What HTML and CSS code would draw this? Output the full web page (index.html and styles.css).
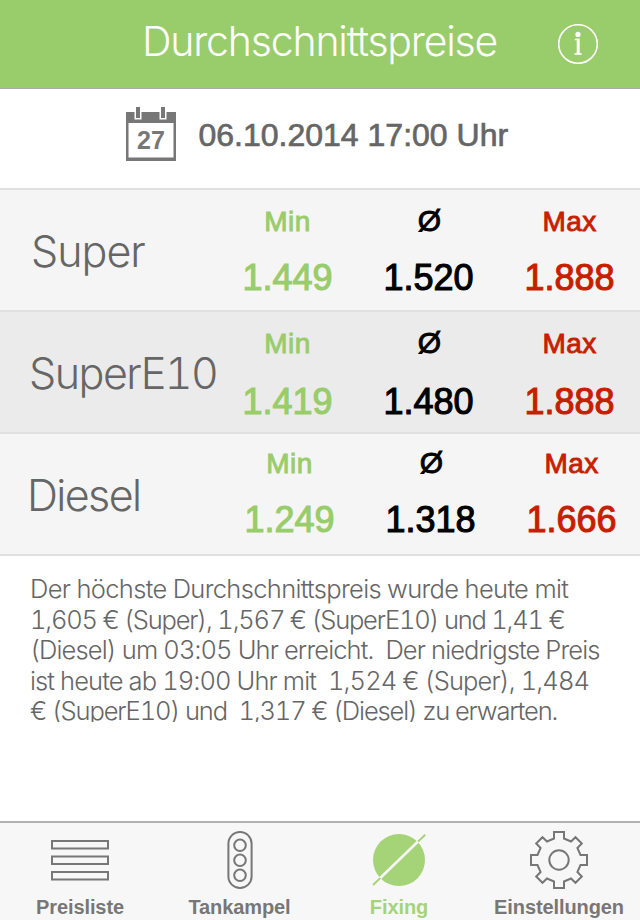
FILE: index.html
```html
<!DOCTYPE html>
<html lang="de">
  <head>
    <meta charset="UTF-8" />
    <meta name="viewport" content="width=device-width, initial-scale=1.0" />
    <title>Durchschnittspreise</title>
    <link rel="stylesheet" href="styles.css">
  </head>
  <body>
    <header>
      <h1>Durchschnittspreise</h1>
      <button class="info" aria-label="Info">
        <svg width="42" height="42" viewBox="0 0 42 42">
          <circle cx="21" cy="21" r="19.3" fill="none" stroke="#fff" stroke-width="1.6" />
          <circle cx="21" cy="11.4" r="2.6" fill="#fff" />
          <path d="M17.8 16.4H21M17.5 30.9h7.2" fill="none" stroke="#fff" stroke-width="1.5" />
          <path d="M21.2 15.6v15.6" fill="none" stroke="#fff" stroke-width="3" />
        </svg>
      </button>
    </header>

    <section class="datum">
      <svg class="kalender" width="50" height="54" viewBox="0 0 50 54">
        <path d="M0 5h50v49H0zM2.5 16v34.5h45V16z" fill="#777" fill-rule="evenodd" />
        <path d="M8.5 0h7v12.5h-7zM33.5 0h7v12.5h-7z" fill="#fff" />
        <path d="M10 0h4v11h-4zM35 0h4v11h-4z" fill="#777" />
        <text x="25" y="42" text-anchor="middle">27</text>
      </svg>
      <span>06.10.2014 17:00 Uhr</span>
    </section>

    <main>
      <article class="sorte super">
        <h2>Super</h2>
        <div class="min"><p>Min</p><strong>1.449</strong></div>
        <div class="avg"><p>Ø</p><strong>1.520</strong></div>
        <div class="max"><p>Max</p><strong>1.888</strong></div>
      </article>
      <article class="sorte e10">
        <h2>SuperE10</h2>
        <div class="min"><p>Min</p><strong>1.419</strong></div>
        <div class="avg"><p>Ø</p><strong>1.480</strong></div>
        <div class="max"><p>Max</p><strong>1.888</strong></div>
      </article>
      <article class="sorte diesel">
        <h2>Diesel</h2>
        <div class="min"><p>Min</p><strong>1.249</strong></div>
        <div class="avg"><p>Ø</p><strong>1.318</strong></div>
        <div class="max"><p>Max</p><strong>1.666</strong></div>
      </article>
    </main>

    <p class="hinweis">
      <span>Der höchste Durchschnittspreis wurde heute mit</span>
      <span>1,605 € (Super), 1,567 € (SuperE10) und 1,41 €</span>
      <span>(Diesel) um 03:05 Uhr erreicht.&nbsp; Der niedrigste Preis</span>
      <span>ist heute ab 19:00 Uhr mit&nbsp; 1,524 € (Super), 1,484</span>
      <span>€ (SuperE10) und&nbsp; 1,317 € (Diesel) zu erwarten.</span>
    </p>

    <nav>
      <a>
        <svg width="58" height="58" viewBox="0 0 58 58">
          <path d="M1 10h56v7.5H1zM1 25.5h56V33H1zM1 41h56v7.5H1z" />
        </svg>
        Preisliste
      </a>
      <a>
        <svg width="58" height="58" viewBox="0 0 58 58">
          <rect x="17.4" y="1" width="23.2" height="56" rx="11.6" />
          <circle cx="29" cy="14.3" r="5.8" />
          <circle cx="29" cy="29.3" r="5.8" />
          <circle cx="29" cy="44.3" r="5.8" />
        </svg>
        Tankampel
      </a>
      <a class="aktiv">
        <svg width="58" height="58" viewBox="0 0 58 58">
          <circle class="scheibe" cx="29" cy="29" r="26" />
          <path class="schnitt" d="M10 47.3 48.5 10" />
          <path d="M3 54l7.2-6.9M48 10.6l7.2-6.9" />
        </svg>
        Fixing
      </a>
      <a>
        <svg width="58" height="58" viewBox="0 0 58 58">
          <path d="M24 1h10v6.5l7 3 4.5-4.3 6.3 6.3-4.4 4.5 3.1 7H57v10h-6.5l-3.1 7 4.4 4.5-6.3 6.3L41 47.5l-7 3V57H24v-6.5l-7-3-4.5 4.3-6.3-6.3 4.4-4.5-3.1-7H1V24h6.5l3.1-7-4.4-4.5 6.3-6.3L17 10.5l7-3z" />
          <circle cx="29" cy="29" r="9.7" />
        </svg>
        Einstellungen
      </a>
    </nav>
  </body>
</html>
```
FILE: styles.css
```css
* {
  box-sizing: border-box;
}

body {
  margin: 0;
  width: 640px;
  height: 920px;
  display: flex;
  flex-direction: column;
  overflow: hidden;
  background: #fff;
  color: #666;
  font-family: "Liberation Sans", Arial, sans-serif;
}

h1,
h2,
p {
  margin: 0;
}

header {
  height: 89px;
  display: grid;
  grid-template-columns: 1fr 356px 1fr;
  background: #99cc6b;
  border-bottom: 1px solid #aaa;
}

h1 {
  grid-column: 2;
  color: #fff;
  font-family: Inter, sans-serif;
  font-weight: 300;
  font-size: 41px;
  line-height: 50px;
  padding-top: 16px;
  letter-spacing: -1.2px;
  white-space: nowrap;
}

.info {
  border: none;
  padding: 0;
  background: none;
  width: 42px;
  height: 42px;
  margin: 23px 0 0 59px;
}

.info svg {
  display: block;
}

.datum {
  height: 99px;
  display: flex;
  padding-left: 125.5px;
  padding-top: 18px;
  font-size: 32px;
  -webkit-text-stroke: 0.7px #666;
}

.datum span {
  margin-left: 23px;
  line-height: 56px;
  white-space: nowrap;
}

.kalender text {
  font-size: 25px;
  font-weight: bold;
  fill: #777;
  -webkit-text-stroke: 0;
}

.sorte {
  height: 122px;
  display: grid;
  grid-template-columns: 217px repeat(3, 141px);
  border-top: 2px solid #e0e0e0;
  background: #f5f5f5;
}

.sorte h2 {
  padding: 35px 0 0 31px;
  color: #666;
  font-family: Inter, sans-serif;
  font-weight: 300;
  font-size: 43px;
  line-height: 52px;
  letter-spacing: -1px;
}

.sorte div {
  padding-top: 16px;
  text-align: center;
}

.sorte p {
  height: 32px;
  font-size: 28px;
  line-height: 32px;
  letter-spacing: 0.4px;
  -webkit-text-stroke: 0.9px;
}

.sorte .avg p {
  padding-left: 2px;
  font-size: 30px;
  line-height: 29px;
}

.sorte strong {
  display: block;
  margin-top: 19px;
  font-size: 36px;
  font-weight: normal;
  line-height: 42px;
  -webkit-text-stroke: 1.1px;
}

.min {
  color: #99cc6b;
}

.avg {
  color: #000;
}

.max {
  color: #c81e00;
}

.e10 {
  background: #ebebeb;
}

.e10 h2 {
  padding-left: 29px;
  letter-spacing: -1.5px;
  font-feature-settings: "tnum";
}

.e10 strong {
  margin-top: 21px;
}

.diesel {
  height: 124px;
  border-bottom: 2px solid #e0e0e0;
}

.diesel h2 {
  padding-left: 27px;
  letter-spacing: -1.6px;
}

.diesel div {
  padding-top: 14px;
  padding-left: 4px;
}

.hinweis {
  height: 148px;
  margin: 18px 0 0 30px;
  overflow: hidden;
  font-family: Inter, sans-serif;
  font-weight: 300;
  font-size: 25.5px;
  font-feature-settings: "tnum";
  line-height: 30.6px;
  letter-spacing: -0.88px;
}

.hinweis span {
  display: block;
  white-space: nowrap;
}

.hinweis span:nth-child(1) {
  letter-spacing: -0.67px;
}

.hinweis span:nth-child(2) {
  letter-spacing: -1.2px;
}

.hinweis span:nth-child(5) {
  letter-spacing: -1.13px;
}

nav {
  height: 99px;
  margin-top: auto;
  display: grid;
  grid-template-columns: repeat(4, 1fr);
  border-top: 2px solid #b2b2b2;
  background: #f7f7f7;
}

nav a {
  display: flex;
  flex-direction: column;
  align-items: center;
  padding-top: 8px;
  color: #777;
  font-size: 20px;
  font-weight: bold;
  line-height: 22px;
  letter-spacing: -0.1px;
}

/* the last three tabs sit a touch left of their centre */
nav a + a {
  padding-right: 1px;
}

nav a:nth-child(n + 3) {
  padding-right: 2px;
}

nav svg {
  margin-bottom: 7px;
  fill: none;
  stroke: #777;
  stroke-width: 2;
}

nav .aktiv {
  color: #a5d378;
}

.aktiv svg {
  stroke: #a5d378;
}

.aktiv .scheibe {
  fill: #a5d378;
  stroke: none;
}

.aktiv .schnitt {
  stroke: #f7f7f7;
  stroke-width: 2.6;
}
```
